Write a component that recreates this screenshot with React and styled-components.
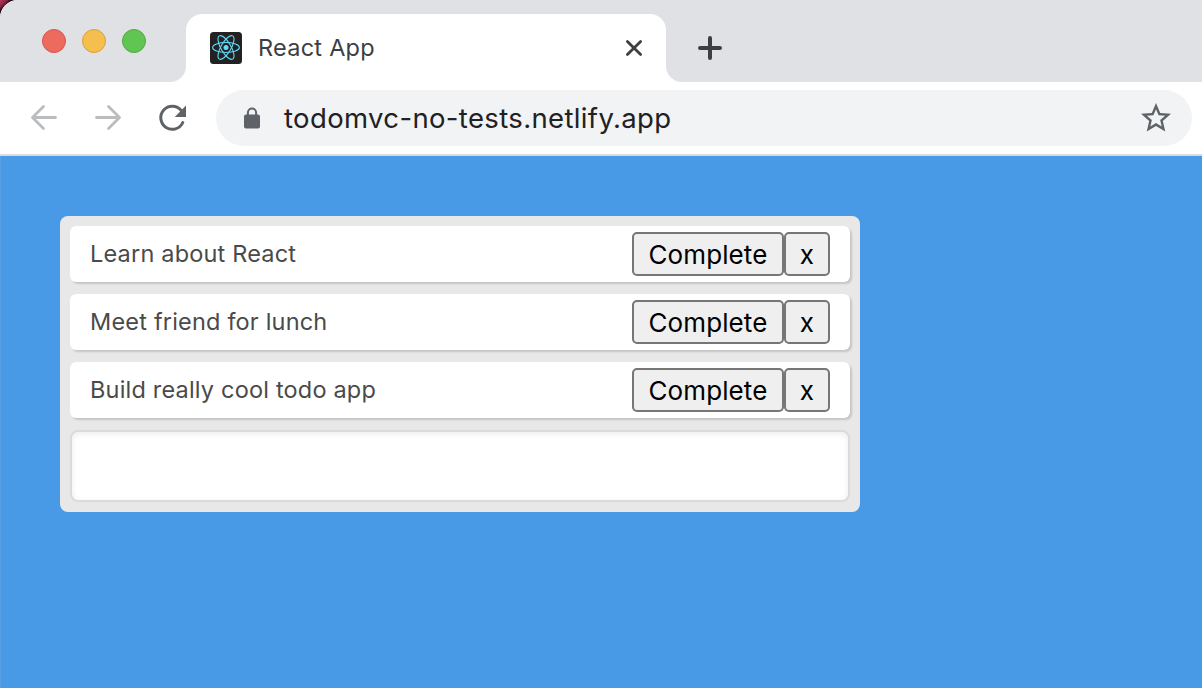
import React from "react";
import styled, { createGlobalStyle } from "styled-components";

const GlobalStyle = createGlobalStyle`
  *, *::before, *::after { box-sizing: border-box; }
  html, body { margin: 0; padding: 0; height: 100%; overflow: hidden; }
  body { font-family: Inter, "Liberation Sans", sans-serif; }
`;

const Desktop = styled.div`
  width: 1202px;
  height: 688px;
  background: linear-gradient(135deg, #b13a58 0, #8e2444 5px, #1a0a10 8px);
`;

const Window = styled.div`
  display: flex;
  flex-direction: column;
  height: 100%;
  overflow: hidden;
  border-top-left-radius: 18px;
  background: #fff;
`;

const TabStrip = styled.header`
  display: flex;
  align-items: flex-end;
  flex: none;
  height: 82px;
  background: #dfe1e5;
`;

const TrafficLights = styled.div`
  display: flex;
  gap: 16px;
  width: 186px;
  height: 82px;
  padding: 29px 0 0 42px;
`;

const Light = styled.span`
  width: 24px;
  height: 24px;
  border-radius: 50%;
  background: ${(p) => p.$fill};
  border: 1px solid ${(p) => p.$edge};
`;

const Tab = styled.div`
  position: relative;
  display: flex;
  align-items: center;
  width: 480px;
  height: 68px;
  padding: 0 22px 0 24px;
  border-radius: 16px 16px 0 0;
  background: #fff;

  &::before, &::after {
    content: "";
    position: absolute;
    bottom: 0;
    width: 16px;
    height: 16px;
  }
  &::before {
    left: -16px;
    background: radial-gradient(circle at 0 0, transparent 15.5px, #fff 16.5px);
  }
  &::after {
    right: -16px;
    background: radial-gradient(circle at 100% 0, transparent 15.5px, #fff 16.5px);
  }
`;

const TabTitle = styled.span`
  flex: 1;
  margin-left: 16px;
  font-size: 23.5px;
  line-height: 32px;
  letter-spacing: 0.25px;
  color: #3c4043;
`;

const Icon = styled.svg`
  display: block;
  flex: none;
`;

const NewTab = styled.div`
  display: flex;
  align-items: center;
  height: 68px;
  padding-left: 32px;
`;

const Toolbar = styled.nav`
  display: flex;
  align-items: center;
  flex: none;
  height: 74px;
  padding: 0 10px 2px 28px;
  border-bottom: 2px solid #d8dbdf;
  background: #fff;
`;

const NavButtons = styled.div`
  display: flex;
  gap: 32px;
  width: 188px;
`;

const AddressBar = styled.div`
  display: flex;
  align-items: center;
  flex: 1;
  height: 56px;
  margin-top: 2px;
  padding: 0 18px 0 26px;
  border-radius: 28px;
  background: #f1f3f4;
`;

const Address = styled.span`
  flex: 1;
  margin-left: 22px;
  font-size: 27.5px;
  line-height: 36px;
  letter-spacing: 0.36px;
  color: #202124;
`;

const Page = styled.main`
  flex: 1;
  padding: 60px;
  background: #489ae7;
  box-shadow: inset 1px 0 0 #5a9fe0;
`;

const TodoList = styled.section`
  display: flex;
  flex-direction: column;
  gap: 12px;
  width: 800px;
  padding: 10px;
  border-radius: 8px;
  background: #e8e8e8;
`;

const Todo = styled.div`
  display: flex;
  align-items: center;
  height: 56px;
  padding: 0 20px;
  border-radius: 6px;
  background: #fff;
  box-shadow: 2px 2px 2px rgba(0, 0, 0, 0.15);
`;

const TodoText = styled.span`
  flex: 1;
  font-size: 23.5px;
  line-height: 32px;
  letter-spacing: 0.19px;
  color: #4a4a4a;
`;

const Button = styled.button`
  width: ${(p) => p.$width}px;
  height: 44px;
  margin: 0;
  padding: 1px 0 0;
  border: 2px solid #767676;
  border-radius: 5px;
  background: #efefef;
  color: #000;
  font-family: inherit;
  font-size: 26px;
  line-height: 36px;
  letter-spacing: 0.1px;
`;

const NewTodo = styled.input`
  width: 780px;
  height: 72px;
  padding: 0 20px;
  border: 2px solid #dbdbdb;
  border-radius: 8px;
  outline: none;
  background: #fff;
  box-shadow: inset 0 2px 6px rgba(0, 0, 0, 0.08);
  font: 24px Inter, sans-serif;
`;

const ReactLogo = () => (
  <Icon width="32" height="32" viewBox="0 0 32 32">
    <rect width="32" height="32" rx="3.5" fill="#222" />
    <g fill="none" stroke="#61dafb" strokeWidth="1.1">
      <ellipse cx="16" cy="15.5" rx="13.4" ry="5" />
      <ellipse cx="16" cy="15.5" rx="13.4" ry="5" transform="rotate(60 16 15.5)" />
      <ellipse cx="16" cy="15.5" rx="13.4" ry="5" transform="rotate(120 16 15.5)" />
    </g>
    <circle cx="16" cy="15.5" r="2.5" fill="#61dafb" />
  </Icon>
);

const BackArrow = () => (
  <Icon width="32" height="32" viewBox="0 0 32 32" fill="none" stroke="#babcbe" strokeWidth="2.8" strokeLinecap="round" strokeLinejoin="round">
    <path d="M27.5 16.5H4.5M15.5 5.5L4.5 16.5L15.5 27.5" />
  </Icon>
);

const ForwardArrow = () => (
  <Icon width="32" height="32" viewBox="0 0 32 32" fill="none" stroke="#babcbe" strokeWidth="2.8" strokeLinecap="round" strokeLinejoin="round">
    <path d="M4.5 16.5H27.5M16.5 5.5L27.5 16.5L16.5 27.5" />
  </Icon>
);

const Reload = () => (
  <Icon width="32" height="32" viewBox="0 0 32 32">
    <path d="M25.2 9.5A11.5 11.5 0 1 0 26.8 21.5" fill="none" stroke="#5f6368" strokeWidth="3" strokeLinecap="round" />
    <path d="M30 4.5V16H18.8Z" fill="#5f6368" />
  </Icon>
);

const Lock = () => (
  <Icon width="20" height="24" viewBox="0 0 20 24">
    <rect x="2" y="8.5" width="16" height="14" rx="2" fill="#5f6368" />
    <path d="M5.9 9V6.6a4.1 4.1 0 0 1 8.2 0V9" fill="none" stroke="#5f6368" strokeWidth="2" />
  </Icon>
);

const Star = () => (
  <Icon width="36" height="36" viewBox="0 0 24 24">
    <path
      d="M22 9.24l-7.19-.62L12 2 9.19 8.63 2 9.24l5.46 4.73L5.82 21 12 17.27 18.18 21l-1.63-7.03L22 9.24zM12 15.4l-3.76 2.27 1-4.28-3.32-2.88 4.38-.38L12 6.1l1.71 4.04 4.38.38-3.32 2.88 1 4.28L12 15.4z"
      fill="#5f6368"
    />
  </Icon>
);

const todos = ["Learn about React", "Meet friend for lunch", "Build really cool todo app"];

export default function App() {
  return (
    <Desktop>
      <GlobalStyle />
      <Window>
        <TabStrip>
          <TrafficLights>
            <Light $fill="#ed6a5e" $edge="#d9534b" />
            <Light $fill="#f5bf4f" $edge="#d8a03d" />
            <Light $fill="#61c554" $edge="#4faa3c" />
          </TrafficLights>
          <Tab>
            <ReactLogo />
            <TabTitle>React App</TabTitle>
            <Icon width="20" height="20" viewBox="0 0 20 20" stroke="#3c4043" strokeWidth="2.8" strokeLinecap="round">
              <path d="M3.4 3.4L16.6 16.6M16.6 3.4L3.4 16.6" />
            </Icon>
          </Tab>
          <NewTab>
            <Icon width="24" height="24" viewBox="0 0 24 24" stroke="#3c4043" strokeWidth="4" strokeLinecap="round">
              <path d="M12 2V22M2 12H22" />
            </Icon>
          </NewTab>
        </TabStrip>
        <Toolbar>
          <NavButtons>
            <BackArrow />
            <ForwardArrow />
            <Reload />
          </NavButtons>
          <AddressBar>
            <Lock />
            <Address>todomvc-no-tests.netlify.app</Address>
            <Star />
          </AddressBar>
        </Toolbar>
        <Page>
          <TodoList>
            {todos.map((todo) => (
              <Todo key={todo}>
                <TodoText>{todo}</TodoText>
                <Button $width={152}>Complete</Button>
                <Button $width={46}>x</Button>
              </Todo>
            ))}
            <NewTodo aria-label="New todo" />
          </TodoList>
        </Page>
      </Window>
    </Desktop>
  );
}
